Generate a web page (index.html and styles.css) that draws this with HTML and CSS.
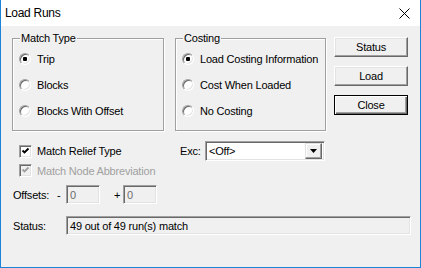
FILE: index.html
```html
<!DOCTYPE html>
<html>
<head>
<meta charset="utf-8">
<link rel="stylesheet" href="styles.css">
</head>
<body>
<div class="window">
  <div class="titlebar">
    <span class="title">Load Runs</span>
    <svg class="close-x" width="11" height="11" viewBox="0 0 11 11"><path d="M0.5 0.5 L10.5 10.5 M10.5 0.5 L0.5 10.5" stroke="#000" stroke-width="1" fill="none"/></svg>
  </div>
  <div class="body">
    <div class="top">
      <div class="group g1">
        <span class="group-title">Match Type</span>
        <div class="opt"><span class="radio checked"></span>Trip</div>
        <div class="opt"><span class="radio"></span>Blocks</div>
        <div class="opt"><span class="radio"></span>Blocks With Offset</div>
      </div>
      <div class="group g2">
        <span class="group-title">Costing</span>
        <div class="opt"><span class="radio checked"></span>Load Costing Information</div>
        <div class="opt"><span class="radio"></span>Cost When Loaded</div>
        <div class="opt"><span class="radio"></span>No Costing</div>
      </div>
      <div class="buttons">
        <div class="btn">Status</div>
        <div class="btn">Load</div>
        <div class="btn default">Close</div>
      </div>
    </div>
    <div class="row r1">
      <div class="check-item"><span class="check"><svg width="11" height="11" viewBox="0 0 11 11"><polyline points="2.5,4.5 4.5,6.5 8.5,2.5" stroke="#000" stroke-width="1.9" fill="none"/></svg></span>Match Relief Type</div>
      <span class="exc-label">Exc:</span>
      <div class="combo"><span class="combo-text">&lt;Off&gt;</span><span class="combo-btn"><svg width="7" height="4" viewBox="0 0 7 4"><path d="M0 0 H7 L3.5 4 Z" fill="#000"/></svg></span></div>
    </div>
    <div class="row r2">
      <div class="check-item disabled"><span class="check"><svg width="11" height="11" viewBox="0 0 11 11"><polyline points="2.5,4.5 4.5,6.5 8.5,2.5" stroke="#a0a0a0" stroke-width="1.9" fill="none"/></svg></span>Match Node Abbreviation</div>
    </div>
    <div class="row offsets">
      <span class="off-label">Offsets:</span>
      <span class="sign">-</span>
      <span class="edit small">0</span>
      <span class="sign plus">+</span>
      <span class="edit small">0</span>
    </div>
    <div class="row status">
      <span class="status-label">Status:</span>
      <span class="edit wide">49 out of 49 run(s) match</span>
    </div>
  </div>
</div>
</body>
</html>
```

FILE: styles.css
```css
html, body {
  margin: 0;
  padding: 0;
  background: #f0f0f0;
}
body {
  font-family: "Liberation Sans", Arial, sans-serif;
  font-size: 11px;
  letter-spacing: -0.2px;
  color: #000;
}
.window {
  width: 421px;
  height: 268px;
  box-sizing: border-box;
  border: 1px solid #1c84d8;
  border-top: none;
  background: #f0f0f0;
  display: flex;
  flex-direction: column;
}
.titlebar {
  height: 26px;
  background: #fff;
  display: flex;
  align-items: center;
  padding-left: 4px;
  flex-shrink: 0;
}
.title {
  font-size: 12px;
  letter-spacing: -0.3px;
  line-height: 14px;
  margin-top: -1px;
}
.close-x {
  margin-left: auto;
  margin-right: 10px;
  display: block;
}
.body {
  flex: 1;
  padding: 12px 0 0 11px;
}
.top {
  display: flex;
  align-items: flex-start;
}
.group {
  position: relative;
  box-sizing: border-box;
  height: 93px;
  border: 1px solid #a0a0a0;
  box-shadow: 1px 1px 0 #fff, inset 1px 1px 0 #fff;
  padding: 7px 0 0 6px;
}
.g1 { width: 152px; }
.g2 { width: 151px; margin-left: 11px; }
.group-title {
  position: absolute;
  top: -7px;
  left: 7px;
  padding: 0 1px;
  line-height: 13px;
  background: #f0f0f0;
}
.opt {
  height: 26px;
  display: flex;
  align-items: center;
}
.radio {
  position: relative;
  width: 12px;
  height: 12px;
  box-sizing: border-box;
  border-radius: 50%;
  background: #fff;
  border: 1px solid;
  border-color: #a0a0a0 #fff #fff #a0a0a0;
  box-shadow: inset 1px 1px 0 #696969, inset -1px -1px 0 #e3e3e3;
  margin-right: 6px;
  flex-shrink: 0;
}
.radio.checked::after {
  content: "";
  position: absolute;
  left: 3px;
  top: 3px;
  width: 4px;
  height: 4px;
  border-radius: 1px;
  background: #000;
}
.buttons {
  margin-left: 8px;
  margin-top: -1px;
  display: flex;
  flex-direction: column;
  gap: 9px;
}
.btn {
  width: 74px;
  height: 20px;
  box-sizing: border-box;
  border: 1px solid;
  border-color: #fff #696969 #696969 #fff;
  box-shadow: inset -1px -1px 0 #a0a0a0, inset 1px 1px 0 #e3e3e3;
  background: #f0f0f0;
  display: flex;
  align-items: center;
  justify-content: center;
}
.btn.default {
  border: 1px solid #000;
  box-shadow: inset 1px 1px 0 #fff, inset -1px -1px 0 #696969, inset -2px -2px 0 #a0a0a0;
}
.row {
  display: flex;
  align-items: center;
}
.r1 {
  margin-top: 10px;
  height: 20px;
}
.r2 {
  height: 19px;
}
.check-item {
  display: flex;
  align-items: center;
  padding-left: 7px;
}
.r1 .check-item {
  width: 161px;
}
.check {
  width: 13px;
  height: 13px;
  box-sizing: border-box;
  border: 1px solid;
  border-color: #a0a0a0 #fff #fff #a0a0a0;
  box-shadow: inset 1px 1px 0 #696969, inset -1px -1px 0 #e3e3e3;
  background: #fff;
  margin-right: 5px;
  flex-shrink: 0;
}
.check svg {
  display: block;
}
.check-item.disabled {
  color: #a0a0a0;
}
.check-item.disabled .check {
  background: #f0f0f0;
}
.exc-label {
  width: 25px;
}
.combo {
  width: 120px;
  height: 20px;
  box-sizing: border-box;
  border: 1px solid;
  border-color: #a0a0a0 #fff #fff #a0a0a0;
  box-shadow: inset 1px 1px 0 #696969, inset -1px -1px 0 #e3e3e3;
  background: #fff;
  display: flex;
  align-items: center;
  padding: 2px;
}
.combo-text {
  flex: 1;
  padding-left: 1px;
}
.combo-btn {
  width: 17px;
  height: 16px;
  box-sizing: border-box;
  border: 1px solid;
  border-color: #e3e3e3 #696969 #696969 #e3e3e3;
  box-shadow: inset -1px -1px 0 #a0a0a0, inset 1px 1px 0 #fff;
  background: #f0f0f0;
  display: flex;
  align-items: center;
  justify-content: center;
}
.combo-btn svg {
  display: block;
}
.offsets {
  margin-top: 5px;
  height: 19px;
  padding-left: 1px;
}
.off-label {
  width: 44px;
}
.sign {
  width: 9px;
}
.sign.plus {
  margin-left: 14px;
}
.edit {
  height: 19px;
  box-sizing: border-box;
  border: 1px solid;
  border-color: #a0a0a0 #fff #fff #a0a0a0;
  box-shadow: inset 1px 1px 0 #696969, inset -1px -1px 0 #e3e3e3;
  background: #f0f0f0;
  display: flex;
  align-items: center;
  padding-left: 3px;
}
.edit.small {
  width: 34px;
  color: #6d6d6d;
}
.status {
  margin-top: 12px;
  height: 19px;
  padding-left: 1px;
}
.status-label {
  width: 53px;
}
.edit.wide {
  width: 345px;
}
```
